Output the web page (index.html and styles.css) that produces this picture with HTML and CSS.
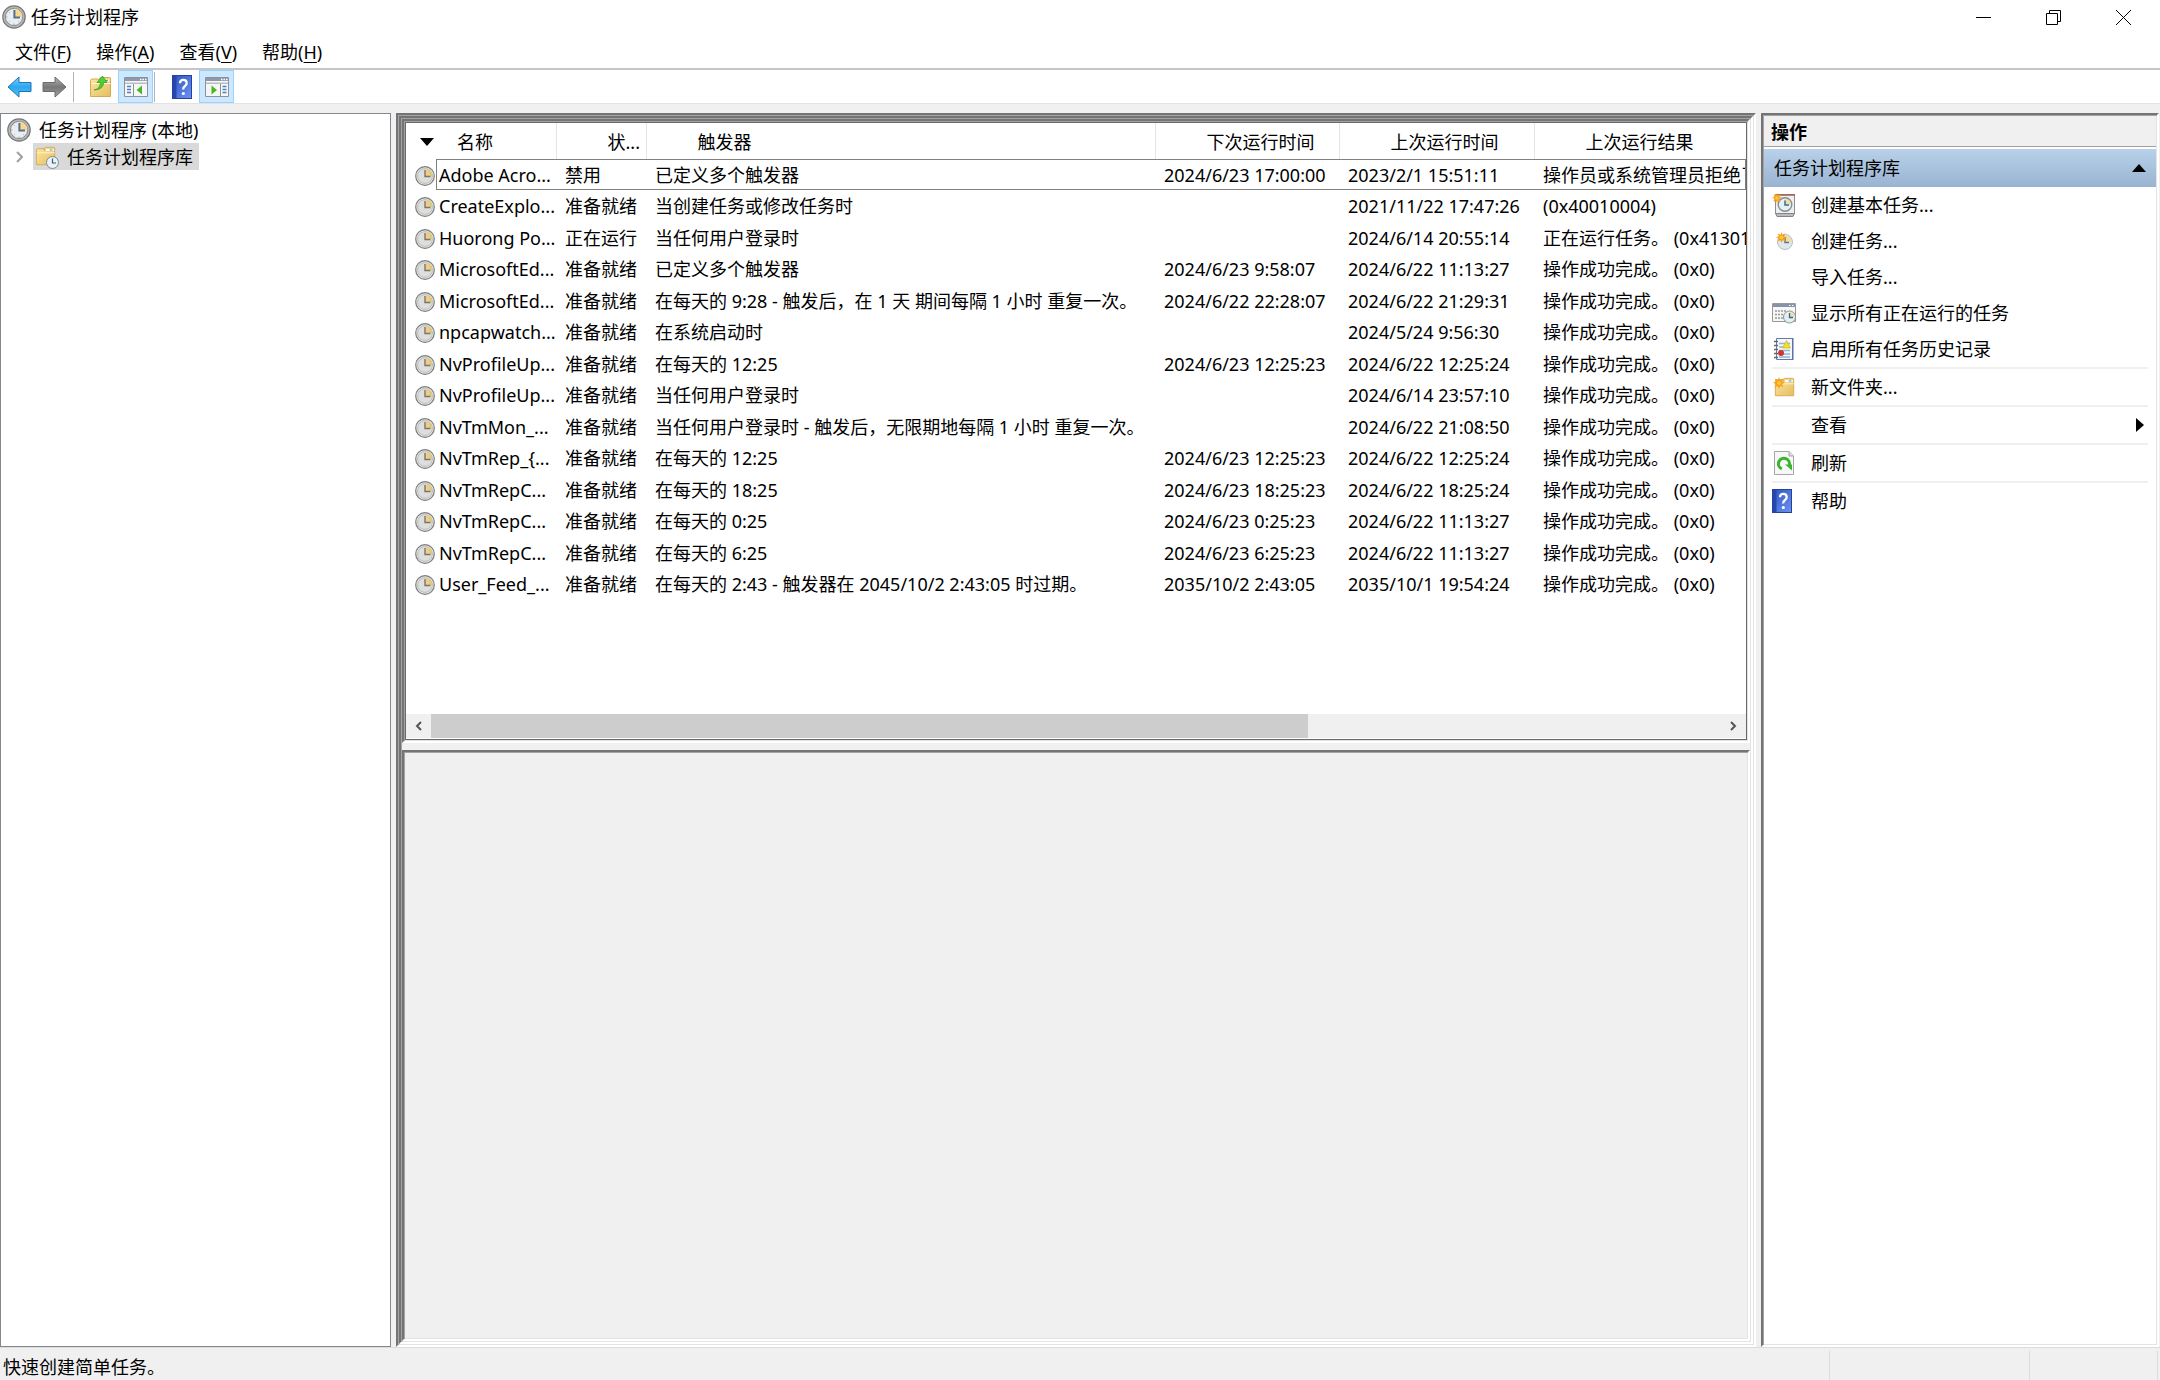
FILE: index.html
```html
<!doctype html>
<html lang="zh-CN">
	<head>
		<meta charset="utf-8" />
		<title>任务计划程序</title>
		<link rel="stylesheet" href="styles.css">
	</head>

	<body>
		<!-- shared icons -->
		<svg class="sprite" aria-hidden="true">
			<defs>
				<linearGradient id="gPaper" x1="0" y1="0" x2="1" y2="1">
					<stop offset="0" stop-color="#fbe7a6" />
					<stop offset="1" stop-color="#e6bd5c" />
				</linearGradient>
				<linearGradient id="gBlue" x1="0" y1="0" x2="0" y2="1">
					<stop offset="0" stop-color="#7fd0fa" />
					<stop offset="0.5" stop-color="#2ba6ef" />
					<stop offset="1" stop-color="#52c3fb" />
				</linearGradient>
				<linearGradient id="gGray" x1="0" y1="0" x2="0" y2="1">
					<stop offset="0" stop-color="#b5b5b5" />
					<stop offset="0.5" stop-color="#777" />
					<stop offset="1" stop-color="#a0a0a0" />
				</linearGradient>
				<linearGradient id="gBook" x1="0" y1="0" x2="1" y2="1">
					<stop offset="0" stop-color="#2f55c4" />
					<stop offset="1" stop-color="#6a92ef" />
				</linearGradient>
			</defs>
			<symbol id="clock" viewBox="0 0 24 24">
				<circle cx="12" cy="12" r="11.800" fill="#777" />
				<circle cx="12" cy="12" r="10.600" fill="#b4b6b7" />
				<circle cx="12" cy="12" r="8.600" fill="#e9eef2" stroke="#8b8e90" stroke-width="1" />
				<path d="M12.500 3.600A8.400 8.400 0 0 1 20.400 12H12.500z" fill="#f8d78e" />
				<path d="M12.400 5v7.600H18" fill="none" stroke="#56708f" stroke-width="2" />
				<path d="M12 18.600v1.400M4.200 12h1.400M6.800 6.800l.8.8M6.800 17.200l.8-.8M17.200 17.200l-.8-.8" stroke="#9aa0a6" />
			</symbol>
			<symbol id="task" viewBox="0 0 20 20">
				<circle cx="10" cy="10" r="9.300" fill="#e6e6e4" stroke="#7d7d7d" stroke-width="1.200" />
				<circle cx="10" cy="10" r="7.400" fill="#dededc" stroke="#b2b2b0" stroke-width="0.800" />
				<path d="M10.500 3A7 7 0 0 1 17 10h-6.500z" fill="#f8c983" />
				<path d="M14 4.200A7 7 0 0 1 17 10h-2z" fill="#cdd27a" />
				<path d="M10 4v6.500h5.500" fill="none" stroke="#7b756d" stroke-width="1.400" />
			</symbol>
			<symbol id="folder" viewBox="0 0 24 24">
				<path d="M1.500 5.500l1-1.500h7l1 2V3.500q0-1 1-1h9q1 0 1 1V21.500h-20z" fill="url(#gPaper)" stroke="#d2aa52" />
				<path d="M12 4.500h8.500v2H12z" fill="#fff" />
				<path d="M16 4.800h3v1.200h-3z" fill="#5a9bdd" />
				<path d="M2 8.500h19.500" stroke="#fff6d2" />
			</symbol>
			<symbol id="spark" viewBox="0 0 12 12">
				<path d="M6 0l1 3 3.200-1.600L8.900 4.600 12 5.800 9 7l1.400 3.300L7.200 9 6 12 4.800 9 1.500 10.400 3 7 0 5.800l3.100-1.200L1.700 1.500 4.900 3z" fill="#f9a11b" />
				<circle cx="6" cy="6" r="2" fill="#ffc641" />
			</symbol>
			<symbol id="help" viewBox="0 0 20 24">
				<path d="M0 0h20v24H0z" fill="#27429c" />
				<path d="M1 1h18v22H1z" fill="url(#gBook)" />
				<path d="M1 1h3.500v22H1z" fill="#2847ae" />
				<path d="M8 8.200Q8 4.800 11.300 4.800T14.700 8Q14.700 10 12.800 11.300T11.300 14.500" fill="none" stroke="#fff" stroke-width="2.300" />
				<circle cx="11.300" cy="18.500" r="1.600" fill="#fff" />
			</symbol>
			<symbol id="pane" viewBox="0 0 24 20">
				<path d="M.5.500h23v19H.5z" fill="#f6f6f4" stroke="#8a92a0" />
				<path d="M1 1h22v3H1z" fill="#8e99ab" />
				<path d="M1 5.500h22v1.500H1z" fill="#b9bec6" />
				<path d="M16 1.800h1.500v1.500H16zM18.500 1.800H20v1.500h-1.500zM21 1.800h1.500v1.500H21z" fill="#fff" />
			</symbol>
		</svg>

		<header class="titlebar">
			<svg class="icon-24"><use href="#clock" /></svg>
			<h1 class="title">任务计划程序</h1>
			<button class="window-button" aria-label="最小化">
				<svg width="15" height="15" viewBox="0 0 15 15"><path d="M0 7.500h15" stroke="#000" /></svg>
			</button>
			<button class="window-button" aria-label="还原">
				<svg width="15" height="15" viewBox="0 0 15 15">
					<path d="M.5 3.500h11v11H.5zM3.500 3.500v-3h11v11h-3" fill="none" stroke="#000" />
				</svg>
			</button>
			<button class="window-button" aria-label="关闭">
				<svg width="15" height="15" viewBox="0 0 15 15"><path d="M0 0l15 15M15 0L0 15" stroke="#000" /></svg>
			</button>
		</header>

		<nav class="menubar">
			<button>文件(<u>F</u>)</button>
			<button>操作(<u>A</u>)</button>
			<button>查看(<u>V</u>)</button>
			<button>帮助(<u>H</u>)</button>
		</nav>

		<div class="toolbar">
			<button aria-label="后退">
				<svg width="25" height="22" viewBox="0 0 25 22">
					<path d="M1 11L12 1v5.500h12v9H12V21z" fill="url(#gBlue)" stroke="#2173b4" />
				</svg>
			</button>
			<button aria-label="前进">
				<svg width="25" height="22" viewBox="0 0 25 22">
					<path d="M24 11L13 1v5.500H1v9h12V21z" fill="url(#gGray)" stroke="#6b6b6b" />
				</svg>
			</button>
			<span class="divider"></span>
			<button aria-label="上一级">
				<svg width="24" height="24" viewBox="0 0 24 24">
					<use href="#folder" width="24" height="24" />
					<path d="M5 15Q11 14 11.500 7.500H8L13.500 1 18 7.500h-3.200Q14 15 5 15z" fill="#4fd033" stroke="#2c9b1d" stroke-width="0.700" />
				</svg>
			</button>
			<button class="pressed" aria-label="显示/隐藏控制台树">
				<svg width="24" height="20" viewBox="0 0 24 20">
					<use href="#pane" width="24" height="20" />
					<path d="M9.500 7v12" stroke="#8a92a0" />
					<path d="M3 9.500h4M3 12.500h4M3 15.500h4" stroke="#4f7fc4" stroke-width="1.500" />
					<path d="M18 8.500v9L12.500 13z" fill="#49b629" />
				</svg>
			</button>
			<span class="divider"></span>
			<button aria-label="帮助">
				<svg width="20" height="24"><use href="#help" /></svg>
			</button>
			<button class="pressed" aria-label="显示/隐藏操作窗格">
				<svg width="24" height="20" viewBox="0 0 24 20">
					<use href="#pane" width="24" height="20" />
					<path d="M15.500 7v12" stroke="#8a92a0" />
					<path d="M17.500 9.500h4M17.500 12.500h4M17.500 15.500h4" stroke="#4f7fc4" stroke-width="1.500" />
					<path d="M6.500 8.500v9L12 13z" fill="#49b629" />
				</svg>
			</button>
		</div>

		<main class="workspace">
			<aside class="tree">
				<div class="tree-row">
					<svg class="icon-24"><use href="#clock" /></svg>
					<span>任务计划程序 (本地)</span>
				</div>
				<div class="tree-row child">
					<button class="expander" aria-label="展开">
						<svg width="7" height="12" viewBox="0 0 7 12"><path d="M1 1l5 5-5 5" fill="none" stroke="#a0a0a0" stroke-width="2" /></svg>
					</button>
					<div class="tree-selected">
						<svg width="24" height="24" viewBox="0 0 24 24">
							<use href="#folder" width="22" height="22" />
							<circle cx="17.500" cy="17.500" r="6" fill="#e8f2f6" stroke="#7e8a8f" />
							<path d="M17.500 13.500v4.500h3.500" fill="none" stroke="#3c5a70" stroke-width="1.200" />
						</svg>
						<span>任务计划程序库</span>
					</div>
				</div>
			</aside>

			<section class="console bevel">
				<div class="console-inner bevel">
					<div class="task-pane bevel">
						<div class="task-list">
							<table class="tasks">
								<colgroup>
									<col class="col-name" />
									<col class="col-status" />
									<col class="col-trigger" />
									<col class="col-next" />
									<col class="col-last" />
									<col />
								</colgroup>
								<thead>
									<tr>
										<th>
											<button class="sorted">
												<svg width="14" height="8" viewBox="0 0 14 8"><path d="M0 0h14L7 8z" /></svg>
												名称
											</button>
										</th>
										<th><button>状...</button></th>
										<th><button>触发器</button></th>
										<th><button>下次运行时间</button></th>
										<th><button>上次运行时间</button></th>
										<th><button>上次运行结果</button></th>
									</tr>
								</thead>
								<tbody>
									<tr class="focused">
										<td><svg class="icon-20"><use href="#task" /></svg>Adobe Acro...</td>
										<td>禁用</td>
										<td>已定义多个触发器</td>
										<td>2024/6/23 17:00:00</td>
										<td>2023/2/1 15:51:11</td>
										<td>操作员或系统管理员拒绝了</td>
									</tr>
									<tr>
										<td><svg class="icon-20"><use href="#task" /></svg>CreateExplo...</td>
										<td>准备就绪</td>
										<td>当创建任务或修改任务时</td>
										<td></td>
										<td>2021/11/22 17:47:26</td>
										<td>(0x40010004)</td>
									</tr>
									<tr>
										<td><svg class="icon-20"><use href="#task" /></svg>Huorong Po...</td>
										<td>正在运行</td>
										<td>当任何用户登录时</td>
										<td></td>
										<td>2024/6/14 20:55:14</td>
										<td>正在运行任务。 (0x41301)</td>
									</tr>
									<tr>
										<td><svg class="icon-20"><use href="#task" /></svg>MicrosoftEd...</td>
										<td>准备就绪</td>
										<td>已定义多个触发器</td>
										<td>2024/6/23 9:58:07</td>
										<td>2024/6/22 11:13:27</td>
										<td>操作成功完成。 (0x0)</td>
									</tr>
									<tr>
										<td><svg class="icon-20"><use href="#task" /></svg>MicrosoftEd...</td>
										<td>准备就绪</td>
										<td>在每天的 9:28 - 触发后，在 1 天 期间每隔 1 小时 重复一次。</td>
										<td>2024/6/22 22:28:07</td>
										<td>2024/6/22 21:29:31</td>
										<td>操作成功完成。 (0x0)</td>
									</tr>
									<tr>
										<td><svg class="icon-20"><use href="#task" /></svg>npcapwatch...</td>
										<td>准备就绪</td>
										<td>在系统启动时</td>
										<td></td>
										<td>2024/5/24 9:56:30</td>
										<td>操作成功完成。 (0x0)</td>
									</tr>
									<tr>
										<td><svg class="icon-20"><use href="#task" /></svg>NvProfileUp...</td>
										<td>准备就绪</td>
										<td>在每天的 12:25</td>
										<td>2024/6/23 12:25:23</td>
										<td>2024/6/22 12:25:24</td>
										<td>操作成功完成。 (0x0)</td>
									</tr>
									<tr>
										<td><svg class="icon-20"><use href="#task" /></svg>NvProfileUp...</td>
										<td>准备就绪</td>
										<td>当任何用户登录时</td>
										<td></td>
										<td>2024/6/14 23:57:10</td>
										<td>操作成功完成。 (0x0)</td>
									</tr>
									<tr>
										<td><svg class="icon-20"><use href="#task" /></svg>NvTmMon_...</td>
										<td>准备就绪</td>
										<td>当任何用户登录时 - 触发后，无限期地每隔 1 小时 重复一次。</td>
										<td></td>
										<td>2024/6/22 21:08:50</td>
										<td>操作成功完成。 (0x0)</td>
									</tr>
									<tr>
										<td><svg class="icon-20"><use href="#task" /></svg>NvTmRep_{...</td>
										<td>准备就绪</td>
										<td>在每天的 12:25</td>
										<td>2024/6/23 12:25:23</td>
										<td>2024/6/22 12:25:24</td>
										<td>操作成功完成。 (0x0)</td>
									</tr>
									<tr>
										<td><svg class="icon-20"><use href="#task" /></svg>NvTmRepC...</td>
										<td>准备就绪</td>
										<td>在每天的 18:25</td>
										<td>2024/6/23 18:25:23</td>
										<td>2024/6/22 18:25:24</td>
										<td>操作成功完成。 (0x0)</td>
									</tr>
									<tr>
										<td><svg class="icon-20"><use href="#task" /></svg>NvTmRepC...</td>
										<td>准备就绪</td>
										<td>在每天的 0:25</td>
										<td>2024/6/23 0:25:23</td>
										<td>2024/6/22 11:13:27</td>
										<td>操作成功完成。 (0x0)</td>
									</tr>
									<tr>
										<td><svg class="icon-20"><use href="#task" /></svg>NvTmRepC...</td>
										<td>准备就绪</td>
										<td>在每天的 6:25</td>
										<td>2024/6/23 6:25:23</td>
										<td>2024/6/22 11:13:27</td>
										<td>操作成功完成。 (0x0)</td>
									</tr>
									<tr>
										<td><svg class="icon-20"><use href="#task" /></svg>User_Feed_...</td>
										<td>准备就绪</td>
										<td>在每天的 2:43 - 触发器在 2045/10/2 2:43:05 时过期。</td>
										<td>2035/10/2 2:43:05</td>
										<td>2035/10/1 19:54:24</td>
										<td>操作成功完成。 (0x0)</td>
									</tr>
								</tbody>
							</table>
							<div class="scrollbar">
								<button aria-label="向左滚动">
									<svg width="7" height="10" viewBox="0 0 7 10"><path d="M6 1L2 5l4 4" fill="none" stroke="#555" stroke-width="2" /></svg>
								</button>
								<div class="track"><div class="thumb"></div></div>
								<button aria-label="向右滚动">
									<svg width="7" height="10" viewBox="0 0 7 10"><path d="M1 1l4 4-4 4" fill="none" stroke="#555" stroke-width="2" /></svg>
								</button>
							</div>
						</div>
					</div>
					<div class="detail-pane bevel"></div>
				</div>
			</section>

			<aside class="actions bevel">
				<h2 class="actions-title">操作</h2>
				<button class="actions-group">
					任务计划程序库
					<svg width="14" height="8" viewBox="0 0 14 8"><path d="M0 8h14L7 0z" /></svg>
				</button>
				<ul class="action-list">
					<li>
						<button>
							<svg class="icon-24" viewBox="0 0 24 24">
								<path d="M3.500 1.500h19v19h-19z" fill="#efefef" stroke="#8d8d8d" />
								<path d="M4 1h19v1.800H4z" fill="#a06a5c" />
								<path d="M3.500 20.500h19l-1.500 3H5z" fill="#bbb" stroke="#858585" />
								<circle cx="13" cy="11.500" r="6.800" fill="#e6f0f4" stroke="#858e93" stroke-width="1.400" />
								<path d="M13 5.700a5.800 5.800 0 0 1 5.800 5.800H13z" fill="#f6dc9d" />
								<path d="M13 7.500v4.500h4" fill="none" stroke="#3b6a92" stroke-width="1.500" />
								<use href="#spark" width="10" height="10" />
							</svg>
							创建基本任务...
						</button>
					</li>
					<li>
						<button>
							<svg class="icon-24" viewBox="0 0 24 24">
								<circle cx="13" cy="13" r="7.500" fill="#dfe9ed" stroke="#b5bfc5" />
								<path d="M13 6.500a6.500 6.500 0 0 1 6.500 6.500H13z" fill="#f6dc9d" />
								<path d="M13 8.500v5h4" fill="none" stroke="#5b7a94" stroke-width="1.500" />
								<use href="#spark" x="4" y="3" width="11" height="11" />
							</svg>
							创建任务...
						</button>
					</li>
					<li><button><span class="icon-24"></span>导入任务...</button></li>
					<li>
						<button>
							<svg class="icon-24" viewBox="0 0 24 24">
								<path d="M.5 2.500h23v18H.5z" fill="#f7f7f5" stroke="#999" />
								<path d="M1 3h22v3H1z" fill="#8694a9" />
								<path d="M17 4h1.500v1H17zM20 4h1.500v1H20z" fill="#fff" />
								<path d="M3 10h12M3 13.500h9M3 17h8" stroke="#999" stroke-width="1.500" stroke-dasharray="2 1" />
								<circle cx="17.500" cy="16" r="6" fill="#e4eff3" stroke="#87939a" />
								<path d="M17.500 11v5h5a5 5 0 0 0-5-5z" fill="#f4dea7" />
								<path d="M17.500 12v4.500h3.500" fill="none" stroke="#39678c" stroke-width="1.300" />
							</svg>
							显示所有正在运行的任务
						</button>
					</li>
					<li>
						<button>
							<svg class="icon-24" viewBox="0 0 24 24">
								<path d="M4.500 1.500h16v21h-16z" fill="#f4f8fc" stroke="#6578b4" />
								<path d="M20 1h1.500v22H20z" fill="#5d70ad" />
								<path d="M7 6.500h11M7 10h11M7 13.500h11M7 17h11M7 20h11" stroke="#8cb7da" stroke-width="1.300" />
								<path d="M2 4.500h4M2 8.500h4M2 12.500h4M2 16.500h4M2 20.500h4" stroke="#666" stroke-width="1.500" />
								<path d="M14.500 3.500l4 7.500h-8z" fill="#f8df25" stroke="#d6b313" stroke-width="0.700" />
								<circle cx="9" cy="16" r="3" fill="#d3342c" />
							</svg>
							启用所有任务历史记录
						</button>
					</li>
					<li class="separated">
						<button>
							<svg class="icon-24" viewBox="0 0 24 24">
								<use href="#folder" x="2" y="1" width="22" height="22" />
								<use href="#spark" x="1" y="2" width="12" height="12" />
							</svg>
							新文件夹...
						</button>
					</li>
					<li class="separated">
						<button>
							<span class="icon-24"></span>查看
							<svg class="submenu" width="8" height="14" viewBox="0 0 8 14"><path d="M0 0v14l8-7z" /></svg>
						</button>
					</li>
					<li class="separated">
						<button>
							<svg class="icon-24" viewBox="0 0 24 24">
								<path d="M2.500.500H17l4.500 4.500v18.500h-19z" fill="#f8f8f8" stroke="#a5a5a5" />
								<path d="M17 .5v4.500h4.500" fill="#ddd" stroke="#a5a5a5" />
								<path d="M9.800 17.800A5.500 5.500 0 1 1 17.300 14" fill="none" stroke="#3db42f" stroke-width="3" />
								<path d="M13 13.500h7v6z" fill="#3db42f" />
							</svg>
							刷新
						</button>
					</li>
					<li class="separated">
						<button><svg class="icon-24"><use href="#help" width="20" height="24" /></svg>帮助</button>
					</li>
				</ul>
			</aside>
		</main>

		<footer class="statusbar">
			<span class="status-text">快速创建简单任务。</span>
			<span class="status-cell wide"></span>
			<span class="status-cell"></span>
		</footer>
	</body>
</html>
```
FILE: styles.css
```css
* {
	box-sizing: border-box;
}

body {
	display: flex;
	flex-direction: column;
	height: 100vh;
	margin: 0;
	overflow: hidden;
	background-color: #f0f0f0;
	color: #000;
	font-family: "Noto Sans", "Noto Sans CJK SC", sans-serif;
	font-size: 18px;
	line-height: 26px;
	white-space: nowrap;
}

button {
	display: flex;
	align-items: center;
	padding: 0;
	border: none;
	background: none;
	color: inherit;
	font: inherit;
	white-space: nowrap;
}

svg {
	display: block;
	flex: none;
}

.sprite {
	position: absolute;
	width: 0;
	height: 0;
}

.icon-24 {
	flex: none;
	width: 24px;
	height: 24px;
}

.icon-20 {
	width: 20px;
	height: 20px;
}

/* sunken 3px edge, stacked for the thick console frame */
.bevel {
	padding: 1px;
	border: 2px solid;
	border-color: #747474 #fff #fff #747474;
	box-shadow:
		inset 1px 1px #a3a3a3,
		inset -1px -1px #e3e3e3;
}

/* title, menu, toolbar */
.titlebar {
	display: flex;
	align-items: center;
	height: 34px;
	padding: 0 2px;
	background-color: #fff;
}

.title {
	flex: 1;
	margin: 0;
	padding-left: 5px;
	font-size: 18px;
	font-weight: 400;
}

.window-button {
	justify-content: center;
	width: 70px;
	height: 34px;
}

.menubar {
	display: flex;
	gap: 1px;
	height: 36px;
	padding: 1px 3px 0;
	border-bottom: 2px solid #c3c5c8;
	background-color: #fff;
}

.menubar button {
	padding: 0 12px;
}

.menubar u {
	text-underline-offset: 3px;
}

.toolbar {
	display: flex;
	align-items: center;
	height: 34px;
	border-bottom: 1px solid #e3e3e3;
	background-color: #fff;
}

.toolbar button {
	justify-content: center;
	width: 35px;
	height: 33px;
	border: 1px solid transparent;
}

.toolbar button:first-child {
	margin-left: 2px;
}

.toolbar .pressed {
	border-color: #99d1ff;
	background-color: #cce8ff;
}

.toolbar .divider {
	width: 1px;
	height: 30px;
	margin: 0 9px 0 1px;
	background-color: #b4b4b4;
}

/* panes */
.workspace {
	display: grid;
	flex: 1;
	grid-template-columns: 391px minmax(0, 1fr) 398px;
	gap: 5px;
	min-height: 0;
	padding: 9px 1px 0 0;
}

.tree {
	padding: 2px 0;
	border: 1px solid #828790;
	background-color: #fff;
}

.tree-row {
	display: flex;
	align-items: center;
	gap: 8px;
	height: 27px;
	padding-left: 6px;
}

.tree-row.child {
	gap: 10px;
	padding-left: 15px;
}

.tree-selected {
	display: flex;
	align-items: center;
	gap: 8px;
	height: 27px;
	padding: 0 6px 0 2px;
	background-color: #d9d9d9;
}

.console,
.console-inner,
.task-pane {
	display: flex;
	flex-direction: column;
	min-height: 0;
}

.console-inner {
	flex: 1;
	gap: 7px;
}

.task-pane {
	flex: 624 0 0;
}

.detail-pane {
	flex: 591 0 0;
}

.task-list {
	display: flex;
	flex: 1;
	flex-direction: column;
	justify-content: space-between;
	overflow: hidden;
	padding-bottom: 1px;
	border: 1px solid #696969;
	background-color: #fff;
}

/* task table */
.tasks {
	width: 100%;
	border-collapse: collapse;
	table-layout: fixed;
}

.col-name {
	width: 150px;
}

.col-status {
	width: 90px;
}

.col-trigger {
	width: 509px;
}

.col-next {
	width: 184px;
}

.col-last {
	width: 195px;
}

.tasks th {
	height: 36px;
	padding: 1px 0 0;
	border-right: 1px solid #e5e5e5;
	font-weight: 400;
}

.tasks th:last-child {
	border-right: none;
}

.tasks th button {
	padding-left: 51px;
}

.tasks th .sorted {
	gap: 23px;
	padding-left: 14px;
}

.tasks td {
	height: 31px;
	padding: 0 0 0 9px;
}

.tasks tr:nth-child(even) td {
	height: 32px;
}

.tasks td .icon-20 {
	display: inline-block;
	margin-right: 4px;
	vertical-align: -4px;
}

.focused {
	position: relative;
}

.focused::after {
	position: absolute;
	inset: 0 0 0 30px;
	border: 1px solid #808080;
	content: "";
}

.scrollbar {
	display: flex;
	height: 24px;
	background-color: #f0f0f0;
}

.scrollbar button {
	justify-content: center;
	width: 25px;
}

.track {
	flex: 1;
}

.thumb {
	width: 68%;
	height: 100%;
	background-color: #cdcdcd;
}

/* actions */
.actions {
	background-color: #fff;
}

.actions-title {
	height: 31px;
	margin: 0 0 2px;
	padding: 3px 7px 0;
	border-bottom: 1px solid #a0a0a0;
	background-color: #f0f0f0;
	font-size: 18px;
	font-weight: 700;
}

.actions-group {
	justify-content: space-between;
	width: 100%;
	height: 38px;
	padding: 0 10px;
	background-image: linear-gradient(#b9d1ea, #99b4d1);
}

.action-list {
	margin: 0;
	padding: 0 8px;
	list-style: none;
}

.action-list button {
	gap: 15px;
	width: 100%;
	height: 36px;
}

.separated {
	border-top: 2px solid #f0f0f0;
}

.submenu {
	margin: 0 4px 0 auto;
}

.statusbar {
	display: flex;
	align-items: stretch;
	height: 33px;
	padding-right: 2px;
	border-top: 1px solid #dcdcdc;
}

.status-text {
	flex: 1;
	padding: 6px 3px 0;
}

.status-cell {
	width: 129px;
	margin-top: 3px;
	border: solid #dcdcdc;
	border-width: 0 1px;
}

.status-cell.wide {
	width: 200px;
	border-right: none;
}
```
